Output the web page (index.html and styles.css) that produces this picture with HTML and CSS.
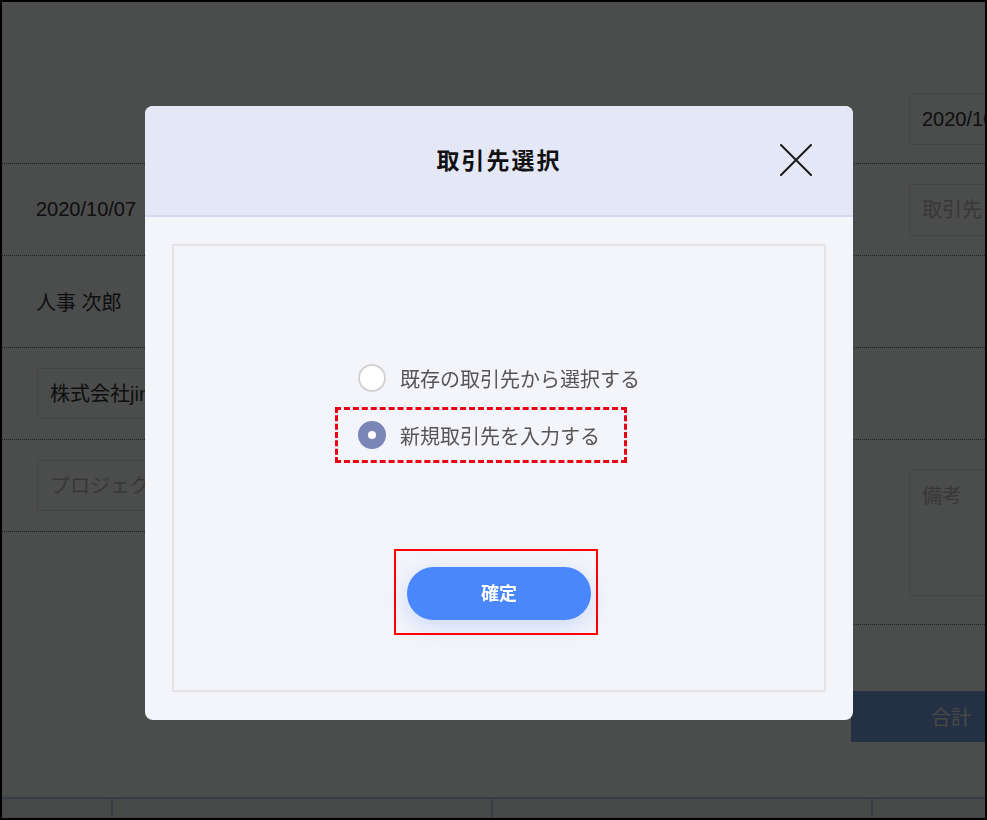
FILE: index.html
```html
<!DOCTYPE HTML>
<html lang="ja">
<head>
    <meta charset="UTF-8">
    <title>取引先選択</title>
    <link rel="stylesheet" href="styles.css">
</head>
<body>

<div class="screen">
    <div class="form">
        <div class="formCol">
            <div class="formRow formRow-top"></div>
            <div class="formRow"><span class="formText">2020/10/07</span></div>
            <div class="formRow"><span class="formText">人事 次郎</span></div>
            <div class="formRow"><div class="field field-left">株式会社jinji</div></div>
            <div class="formRow"><div class="field field-left placeholder">プロジェクト</div></div>
        </div>
        <div class="formCol formCol-right">
            <div class="formRow formRow-top formRow-topRight"><div class="field">2020/10/07</div></div>
            <div class="formRow"><div class="field placeholder">取引先</div></div>
            <div class="formRow"></div>
            <div class="formRow"></div>
            <div class="formRow formRow-tall"><div class="field field-area placeholder">備考</div></div>
        </div>
    </div>

    <div class="summary">
        <div class="summaryHead">合計</div>
    </div>

    <div class="tableHead">
        <b class="th th-no"></b>
        <b class="th th-item">品目</b>
        <b class="th th-item">金額</b>
        <b class="th th-rest"></b>
    </div>
</div>

<div class="overlay"></div>

<div class="modal">
    <div class="modalHeader">
        <h2 class="modalTitle">取引先選択</h2>
        <a href="javascript:;" class="modalClose">
            <svg width="32" height="32" viewBox="0 0 32 32">
                <path d="M1 1 L31 31 M31 1 L1 31" stroke="#1c1c1c" stroke-width="2" fill="none" stroke-linecap="round"/>
            </svg>
        </a>
    </div>
    <div class="modalBody">
        <div class="choiceBox">
            <div class="options">
                <label class="option"><i class="radio"></i>既存の取引先から選択する</label>
                <label class="option option-marked"><i class="radio on"></i>新規取引先を入力する</label>
            </div>
            <a href="javascript:;" class="btnOk">確定</a>
        </div>
    </div>
</div>

</body>
</html>
```

FILE: styles.css
```css
html, body {
    margin: 0;
    padding: 0;
}
body {
    font-family: "Liberation Sans", "Noto Sans CJK JP", sans-serif;
    color: #333;
    background: #000;
}
.screen {
    box-sizing: border-box;
    width: 987px;
    height: 820px;
    border: 2px solid #000;
    background: #fcfffe;
    overflow: hidden;
}

/* form behind the dialog */
.form {
    display: grid;
    grid-template-columns: 493px 1fr;
}
.formRow {
    box-sizing: border-box;
    height: 92px;
    border-bottom: 1px dotted #666;
    display: flex;
    align-items: center;
}
.formRow-top {
    height: 162px;
}
.formRow-topRight {
    align-items: flex-start;
    padding-top: 91px;
}
.formRow-tall {
    height: 185px;
}
.formCol-right .formRow {
    padding-left: 414px;
}
.formText {
    font-size: 20px;
    padding-left: 34px;
}
.field {
    box-sizing: border-box;
    width: 220px;
    height: 52px;
    flex-shrink: 0;
    border: 1px solid #e8e8e8;
    padding: 0 12px;
    font-size: 20px;
    line-height: 50px;
    white-space: nowrap;
}
.field-left {
    margin-left: 35px;
    height: 51px;
}
.field-area {
    height: 127px;
    line-height: 1.4;
    padding-top: 12px;
}
.placeholder {
    color: #bbb;
}

.summary {
    display: flex;
    justify-content: flex-end;
    margin-top: 66px;
}
.summaryHead {
    width: 134px;
    height: 51px;
    line-height: 51px;
    background: #78a0e3;
    color: #f2f2f2;
    font-size: 20px;
    font-family: "Noto Sans CJK JP", sans-serif;
    text-align: right;
    padding-right: 14px;
    box-sizing: border-box;
}

.tableHead {
    display: grid;
    grid-template-columns: 109px 380px 380px 1fr;
    margin-top: 55px;
    border-top: 2px solid #c4cde6;
    background: #eff3f1;
    height: 40px;
}
.th {
    border-left: 2px solid #c4cde6;
    font-size: 18px;
    text-align: center;
    padding-top: 14px;
    font-family: "Noto Sans CJK JP", sans-serif;
}
.th-no {
    border-left: 0;
}

/* dialog */
.overlay {
    position: fixed;
    left: 0;
    top: 0;
    right: 0;
    bottom: 0;
    background: rgba(0,0,0,.7);
}
.modal {
    position: fixed;
    left: 145px;
    top: 106px;
    width: 708px;
    border-radius: 8px;
    overflow: hidden;
    background: #f4f5fa;
    font-family: "Noto Sans CJK JP", sans-serif;
}
.modalHeader {
    position: relative;
    height: 109px;
    background: #e4e7f6;
    border-bottom: 2px solid #d6d9f1;
    display: flex;
    align-items: center;
    justify-content: center;
}
.modalTitle {
    margin: 0;
    font-size: 23px;
    font-weight: bold;
    letter-spacing: 2px;
    color: #111;
    padding-bottom: 4px;
}
.modalClose {
    position: absolute;
    right: 41px;
    top: 38px;
    width: 32px;
    height: 32px;
}
.modalClose svg {
    display: block;
}
.modalBody {
    padding: 27px 27px 28px;
}
.choiceBox {
    box-sizing: border-box;
    height: 448px;
    border: 2px solid #e4e4e6;
    display: flex;
    flex-direction: column;
    align-items: center;
    padding-top: 118px;
}
.options {
    display: flex;
    flex-direction: column;
    align-items: flex-start;
    gap: 29px;
}
.option {
    display: flex;
    align-items: center;
    gap: 14px;
    height: 28px;
    font-size: 20px;
    color: #555;
}
.option-marked {
    position: relative;
}
.option-marked:after {
    content: "";
    position: absolute;
    left: -23px;
    right: -27px;
    top: -14px;
    bottom: -14px;
    border: 3px dashed #e60012;
}
.radio {
    box-sizing: border-box;
    width: 28px;
    height: 28px;
    border-radius: 50%;
    background: #fff;
    border: 2px solid #d3d3d3;
    position: relative;
}
.radio.on {
    background: #7a86b6;
    border-color: #7a86b6;
}
.radio.on:after {
    content: "";
    position: absolute;
    left: 50%;
    top: 50%;
    width: 8px;
    height: 8px;
    margin: -4px 0 0 -4px;
    border-radius: 50%;
    background: #fff;
}
.btnOk {
    position: relative;
    display: block;
    margin-top: 118px;
    width: 184px;
    height: 53px;
    line-height: 51px;
    border-radius: 27px;
    background: #4a86fc;
    color: #fff;
    font-size: 18px;
    font-weight: bold;
    text-align: center;
    text-decoration: none;
    box-shadow: 0 6px 22px rgba(74,134,252,.25);
}
.btnOk:after {
    content: "";
    position: absolute;
    left: -13px;
    right: -7px;
    top: -18px;
    bottom: -15px;
    border: 2px solid #f00;
}
```
